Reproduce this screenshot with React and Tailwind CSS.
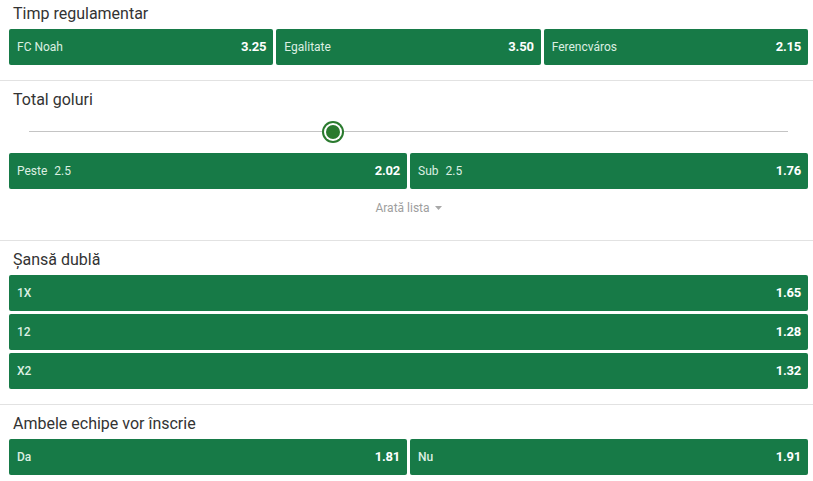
import React from 'react';

const font = { fontFamily: 'Roboto, "Noto Sans", Arial, sans-serif' };

function Odd({ label, line, odd, bold, row }) {
  return (
    <button
      className={`${row ? 'w-full' : 'flex-1'} h-9 shrink-0 flex items-center justify-between pl-2 pr-[7px] bg-[#177a47] rounded-[2px] cursor-pointer`}
    >
      <span className={`text-[12px] text-[#dcefe2] ${bold ? 'font-medium' : ''}`}>
        {label}
        {line && <span className="ml-[7px]">{line}</span>}
      </span>
      <span className="text-[13px] font-bold text-white tracking-[-0.2px]">{odd}</span>
    </button>
  );
}

function Section({ title, first, children, last }) {
  return (
    <section className={`${first ? 'pt-1' : 'pt-[9px]'} ${last ? 'pb-1' : 'pb-[15px] border-b border-[#e2e2e2]'}`}>
      <h2 className="pl-[13px] text-[16px] leading-5 text-[#333] mb-[5px]">{title}</h2>
      <div className="pl-[9px] pr-[5px]">{children}</div>
    </section>
  );
}

export default function App() {
  return (
    <div className="w-[813px] bg-white" style={font}>
      <Section title="Timp regulamentar" first>
        <div className="flex gap-[3px]">
          <Odd label="FC Noah" odd="3.25" />
          <Odd label="Egalitate" odd="3.50" />
          <Odd label="Ferencváros" odd="2.15" />
        </div>
      </Section>

      <section className="pt-[9px] pb-[24px] border-b border-[#e2e2e2]">
        <h2 className="pl-[13px] text-[16px] leading-5 text-[#333]">Total goluri</h2>
        <div className="pl-[9px] pr-[5px]">
          <div className="h-[43px] px-5 flex items-center">
            <div className="relative w-full h-px bg-[#c4c4c4]">
              <div className="absolute left-[40%] top-1/2 -translate-x-1/2 -translate-y-1/2 w-[22px] h-[22px] rounded-full bg-[#2a7a2e] flex items-center justify-center">
                <div className="w-[18px] h-[18px] rounded-full bg-white flex items-center justify-center">
                  <div className="w-[14px] h-[14px] rounded-full bg-[#2a7a2e]" />
                </div>
              </div>
            </div>
          </div>
          <div className="flex gap-[3px]">
            <Odd label="Peste" line="2.5" odd="2.02" />
            <Odd label="Sub" line="2.5" odd="1.76" />
          </div>
          <div className="flex justify-center items-center mt-[11px] h-[16px] text-[12px] text-[#9e9e9e]">
            <span>Arată lista</span>
            <svg className="ml-[5px]" width="7" height="4" viewBox="0 0 7 4">
              <path d="M0 0h7L3.5 4z" fill="#a8a8a8" />
            </svg>
          </div>
        </div>
      </section>

      <Section title="Șansă dublă">
        <div className="flex flex-col gap-[3px]">
          <Odd row bold label="1X" odd="1.65" />
          <Odd row bold label="12" odd="1.28" />
          <Odd row bold label="X2" odd="1.32" />
        </div>
      </Section>

      <Section title="Ambele echipe vor înscrie" last>
        <div className="flex gap-[3px]">
          <Odd bold label="Da" odd="1.81" />
          <Odd bold label="Nu" odd="1.91" />
        </div>
      </Section>
    </div>
  );
}
